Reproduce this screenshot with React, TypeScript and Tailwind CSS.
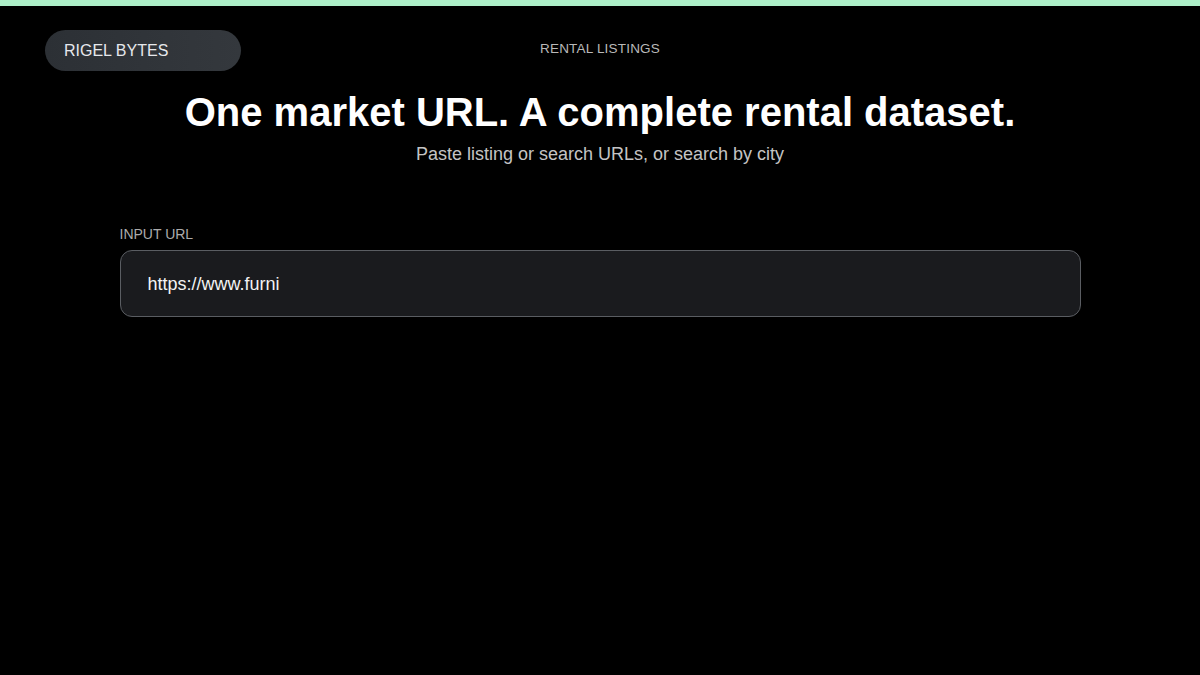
import React from "react";

export default function App() {
  return (
    <div
      className="min-h-[675px] w-full bg-black text-white"
      style={{ fontFamily: '"Liberation Sans", Arial, sans-serif' }}
    >
      <div className="h-[6px] bg-[#aef0c9]" />
      <header className="grid grid-cols-[1fr_auto_1fr] items-center px-[45px] pt-[24px]">
        <div>
          <div className="flex h-[41px] w-[196px] items-center rounded-full bg-gradient-to-r from-[#2c3035] to-[#34383d] pl-[19px] text-[16px] text-[#e6e8ec]">
            RIGEL BYTES
          </div>
        </div>
        <div className="-mt-[3px] text-[13.5px] tracking-[0.2px] text-[#b9b9b9]">RENTAL LISTINGS</div>
        <div />
      </header>

      <section className="mt-[17px] flex flex-col items-center">
        <h1 className="text-[40px] font-bold leading-[48px] text-white">
          One market URL. A complete rental dataset.
        </h1>
        <p className="mt-[6px] text-[18px] leading-[24px] text-[#c4c4c4]">
          Paste listing or search URLs, or search by city
        </p>
      </section>

      <main className="mx-auto mt-[60px] w-[961px]">
        <label className="block text-[14px] leading-[16px] text-[#acacac]">INPUT URL</label>
        <div className="mt-[8px] flex h-[67px] items-center rounded-[12px] border border-[#5a5d62] bg-[#1a1b1e] px-[27px]">
          <span className="pt-[1px] text-[18px] text-[#f3f3f3]">https://www.furni</span>
        </div>
      </main>
    </div>
  );
}
